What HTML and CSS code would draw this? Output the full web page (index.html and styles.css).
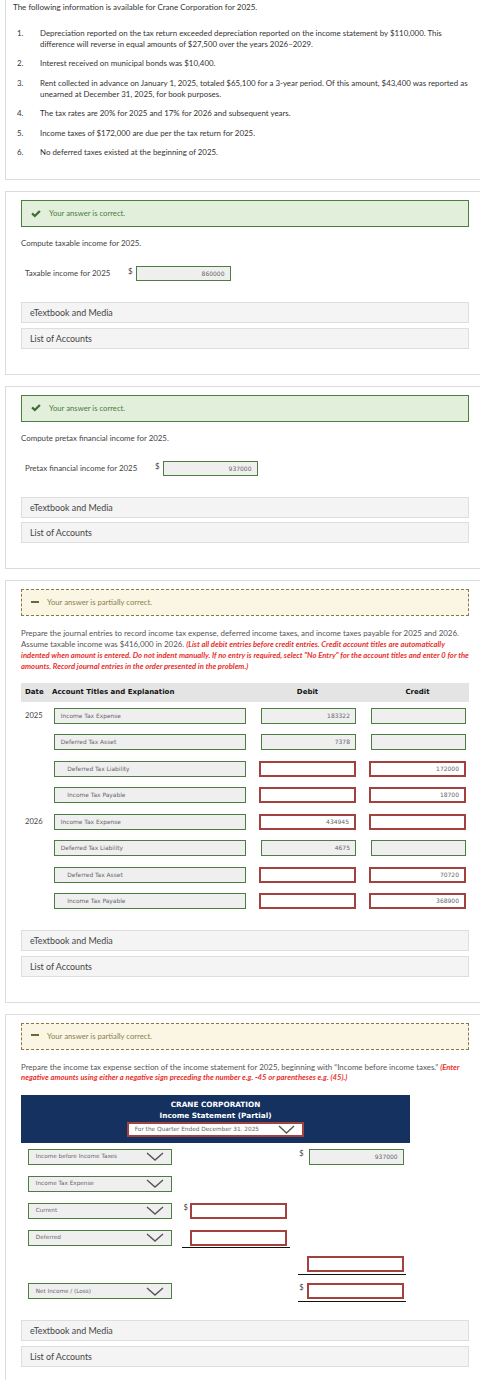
FILE: index.html
```html
<!DOCTYPE html>
<html lang="en">
<head>
<meta charset="utf-8">
<title>Crane Corporation</title>
<link rel="stylesheet" href="styles.css">
</head>
<body>
<div class="page">

  <div class="card card-first">
    <p class="intro">The following information is available for Crane Corporation for 2025.</p>
    <ol class="facts">
      <li><span class="num">1.</span><span class="txt">Depreciation reported on the tax return exceeded depreciation reported on the income statement by $110,000. This difference will reverse in equal amounts of $27,500 over the years 2026–2029.</span></li>
      <li><span class="num">2.</span><span class="txt">Interest received on municipal bonds was $10,400.</span></li>
      <li><span class="num">3.</span><span class="txt">Rent collected in advance on January 1, 2025, totaled $65,100 for a 3-year period. Of this amount, $43,400 was reported as unearned at December 31, 2025, for book purposes.</span></li>
      <li><span class="num">4.</span><span class="txt">The tax rates are 20% for 2025 and 17% for 2026 and subsequent years.</span></li>
      <li><span class="num">5.</span><span class="txt">Income taxes of $172,000 are due per the tax return for 2025.</span></li>
      <li><span class="num">6.</span><span class="txt">No deferred taxes existed at the beginning of 2025.</span></li>
    </ol>
  </div>

  <div class="card">
    <div class="inner">
      <div class="status correct">
        <svg class="check" width="10" height="8" viewBox="0 0 10 8"><path d="M0.3 4.2 L1.9 2.6 L3.8 4.4 L8.1 0.2 L9.7 1.8 L3.8 7.6 Z" fill="#3f6b36"/></svg>
        <span>Your answer is correct.</span>
      </div>
      <p class="prompt">Compute taxable income for 2025.</p>
      <div class="answer-row">
        <span class="alabel lbl-tax">Taxable income for 2025</span>
        <span class="dollar">$</span>
        <span class="box ok w95">860000</span>
      </div>
      <div class="bar first-bar">eTextbook and Media</div>
      <div class="bar">List of Accounts</div>
    </div>
  </div>

  <div class="card">
    <div class="inner">
      <div class="status correct">
        <svg class="check" width="10" height="8" viewBox="0 0 10 8"><path d="M0.3 4.2 L1.9 2.6 L3.8 4.4 L8.1 0.2 L9.7 1.8 L3.8 7.6 Z" fill="#3f6b36"/></svg>
        <span>Your answer is correct.</span>
      </div>
      <p class="prompt">Compute pretax financial income for 2025.</p>
      <div class="answer-row">
        <span class="alabel lbl-pretax">Pretax financial income for 2025</span>
        <span class="dollar">$</span>
        <span class="box ok w95">937000</span>
      </div>
      <div class="bar first-bar">eTextbook and Media</div>
      <div class="bar">List of Accounts</div>
    </div>
  </div>

  <div class="card">
    <div class="inner">
      <div class="status partial">
        <span class="minus"></span>
        <span>Your answer is partially correct.</span>
      </div>
      <p class="instr">Prepare the journal entries to record income tax expense, deferred income taxes, and income taxes payable for 2025 and 2026. Assume taxable income was $416,000 in 2026. <em class="warn">(List all debit entries before credit entries. Credit account titles are automatically indented when amount is entered. Do not indent manually. If no entry is required, select "No Entry" for the account titles and enter 0 for the amounts. Record journal entries in the order presented in the problem.)</em></p>

      <div class="jhead">
        <span class="h-date">Date</span>
        <span class="h-acct">Account Titles and Explanation</span>
        <span class="h-amt">Debit</span>
        <span class="h-amt h-credit">Credit</span>
      </div>

      <div class="jrow">
        <span class="jdate">2025</span>
        <span class="acct">Income Tax Expense</span>
        <span class="amt"><span class="box ok">183322</span></span>
        <span class="amt credit"><span class="box ok"></span></span>
      </div>
      <div class="jrow">
        <span class="jdate"></span>
        <span class="acct">Deferred Tax Asset</span>
        <span class="amt"><span class="box ok">7378</span></span>
        <span class="amt credit"><span class="box ok"></span></span>
      </div>
      <div class="jrow">
        <span class="jdate"></span>
        <span class="acct indent">Deferred Tax Liability</span>
        <span class="amt"><span class="box bad"></span></span>
        <span class="amt credit"><span class="box bad">172000</span></span>
      </div>
      <div class="jrow">
        <span class="jdate"></span>
        <span class="acct indent">Income Tax Payable</span>
        <span class="amt"><span class="box bad"></span></span>
        <span class="amt credit"><span class="box bad">18700</span></span>
      </div>
      <div class="jrow">
        <span class="jdate">2026</span>
        <span class="acct">Income Tax Expense</span>
        <span class="amt"><span class="box bad">434945</span></span>
        <span class="amt credit"><span class="box bad"></span></span>
      </div>
      <div class="jrow">
        <span class="jdate"></span>
        <span class="acct">Deferred Tax Liability</span>
        <span class="amt"><span class="box ok">4675</span></span>
        <span class="amt credit"><span class="box ok"></span></span>
      </div>
      <div class="jrow">
        <span class="jdate"></span>
        <span class="acct indent">Deferred Tax Asset</span>
        <span class="amt"><span class="box bad"></span></span>
        <span class="amt credit"><span class="box bad">70720</span></span>
      </div>
      <div class="jrow">
        <span class="jdate"></span>
        <span class="acct indent">Income Tax Payable</span>
        <span class="amt"><span class="box bad"></span></span>
        <span class="amt credit"><span class="box bad">368900</span></span>
      </div>

      <div class="bar first-bar">eTextbook and Media</div>
      <div class="bar">List of Accounts</div>
    </div>
  </div>

  <div class="card card-last">
    <div class="inner">
      <div class="status partial">
        <span class="minus"></span>
        <span>Your answer is partially correct.</span>
      </div>
      <p class="instr instr-short">Prepare the income tax expense section of the income statement for 2025, beginning with “Income before income taxes.” <em class="warn">(Enter negative amounts using either a negative sign preceding the number e.g. -45 or parentheses e.g. (45).)</em></p>

      <div class="is-head">
        <div class="is-title">CRANE CORPORATION</div>
        <div class="is-title">Income Statement (Partial)</div>
        <div class="period">
          <span>For the Quarter Ended December 31. 2025</span>
          <svg width="17" height="9" viewBox="0 0 17 9"><polyline points="1,1 8.5,8 16,1" fill="none" stroke="#555" stroke-width="1.4"/></svg>
        </div>
      </div>

      <div class="is-rows">
        <div class="is-row">
          <span class="sel"><span>Income before Income Taxes</span><svg width="18" height="9" viewBox="0 0 18 9"><polyline points="1,1 9,8 17,1" fill="none" stroke="#555" stroke-width="1.4"/></svg></span>
          <span class="col2"></span>
          <span class="col3"><span class="dollar-s">$</span><span class="box ok">937000</span></span>
        </div>
        <div class="is-row">
          <span class="sel"><span>Income Tax Expense</span><svg width="18" height="9" viewBox="0 0 18 9"><polyline points="1,1 9,8 17,1" fill="none" stroke="#555" stroke-width="1.4"/></svg></span>
        </div>
        <div class="is-row">
          <span class="sel"><span>Current</span><svg width="18" height="9" viewBox="0 0 18 9"><polyline points="1,1 9,8 17,1" fill="none" stroke="#555" stroke-width="1.4"/></svg></span>
          <span class="col2"><span class="dollar-s">$</span><span class="box bad"></span></span>
        </div>
        <div class="is-row">
          <span class="sel"><span>Deferred</span><svg width="18" height="9" viewBox="0 0 18 9"><polyline points="1,1 9,8 17,1" fill="none" stroke="#555" stroke-width="1.4"/></svg></span>
          <span class="col2 under"><span class="box bad"></span></span>
        </div>
        <div class="is-row">
          <span class="sel-empty"></span>
          <span class="col2"></span>
          <span class="col3 under"><span class="box bad"></span></span>
        </div>
        <div class="is-row">
          <span class="sel"><span>Net Income / (Loss)</span><svg width="18" height="9" viewBox="0 0 18 9"><polyline points="1,1 9,8 17,1" fill="none" stroke="#555" stroke-width="1.4"/></svg></span>
          <span class="col2"></span>
          <span class="col3 under"><span class="dollar-s">$</span><span class="box bad"></span></span>
        </div>
      </div>

      <div class="bar first-bar">eTextbook and Media</div>
      <div class="bar">List of Accounts</div>
    </div>
  </div>

</div>
</body>
</html>
```

FILE: styles.css
```css
html, body {
  margin: 0;
  padding: 0;
  background: #ffffff;
  overflow: hidden;
}

body {
  width: 480px;
  font-family: Lato, "Liberation Sans", sans-serif;
  color: #333333;
  font-size: 8px;
  line-height: 11px;
}

p { margin: 0; }

.page {
  padding-left: 5px;
}

.card {
  width: 500px;
  border: 1px solid #dcdcdc;
  border-right: none;
  background: #ffffff;
  margin-top: 11px;
}

.card-first {
  margin-top: 0;
  border-top: none;
  padding: 2px 0 21px 7px;
}

.card-last {
  border-bottom: none;
  padding-bottom: 30px;
}

.intro {
  font-size: 8px;
  color: #333;
}

.facts {
  list-style: none;
  margin: 14.5px 0 0 4px;
  padding: 0;
  width: 452px;
}

.facts li {
  display: flex;
  margin-bottom: 8.5px;
  font-size: 7.9px;
}

.facts li:last-child { margin-bottom: 0; }

.facts .num {
  flex: 0 0 23px;
}

.facts .txt {
  flex: 1;
}

.inner {
  width: 448px;
  padding: 8px 0 25px 15px;
}

/* status banners */
.status {
  box-sizing: border-box;
  height: 27px;
  display: flex;
  align-items: center;
  padding-left: 9px;
  font-size: 7.7px;
}

.status.correct {
  background: #e2efda;
  border: 1px solid #4e7d43;
  color: #4d7a43;
}

.status.partial {
  background: #faf6e3;
  border: 1px dashed #8b7645;
  color: #8b7d52;
}

.check {
  margin-right: 8px;
  flex: 0 0 10px;
}

.minus {
  width: 8px;
  height: 2px;
  background: #74643a;
  margin-right: 8px;
  margin-top: -2px;
}

.prompt {
  margin-top: 11px;
  font-size: 7.9px;
  color: #444;
}

.answer-row {
  display: flex;
  align-items: center;
  margin-top: 17px;
  margin-left: 4px;
  height: 15px;
  font-size: 7.9px;
  color: #444;
}

.alabel.lbl-tax { width: 103px; }
.alabel.lbl-pretax { width: 130px; }

.dollar {
  width: 8px;
  align-self: flex-start;
  line-height: 10px;
}

/* boxes */
.box {
  box-sizing: border-box;
  display: block;
  height: 16px;
  line-height: 14px;
  font-family: "DejaVu Sans", Verdana, sans-serif;
  font-size: 6px;
  color: #666;
  text-align: right;
}

.box.ok {
  width: 94.5px;
  border: 1px solid #4e7d43;
  background: #efefef;
  padding-right: 5px;
  margin-left: auto;
}

.box.bad {
  width: 97px;
  border: 2px solid #a3413e;
  background: #ffffff;
  padding-right: 5px;
  line-height: 12px;
}

.answer-row .box.ok {
  height: 15px;
  line-height: 13px;
  margin-left: 0;
}

/* bars */
.bar {
  box-sizing: border-box;
  height: 21px;
  line-height: 19px;
  margin-top: 4.5px;
  background: #f4f4f4;
  border: 1px solid #dedede;
  padding-left: 8px;
  font-size: 8.9px;
  color: #444;
}

.bar.first-bar { margin-top: 21px; }

/* instructions */
.instr {
  margin-top: 12px;
  font-size: 7.9px;
  line-height: 10.9px;
  color: #555;
}

.instr-short {
  line-height: 10.5px;
}

.warn {
  color: #e8302d;
  font-weight: bold;
  font-style: italic;
  font-size: 7.7px;
}

/* journal table */
.jhead {
  display: flex;
  align-items: center;
  height: 19.5px;
  margin-top: 11px;
  background: #e4e4e4;
  font-family: "DejaVu Sans", Verdana, sans-serif;
  font-weight: bold;
  font-size: 7px;
  color: #111;
}

.h-date {
  box-sizing: border-box;
  width: 31px;
  padding-left: 4px;
}

.h-acct {
  width: 207px;
}

.h-amt {
  width: 97px;
  text-align: center;
}

.h-credit {
  margin-left: 13px;
}

.jrow {
  display: flex;
  align-items: center;
  height: 16px;
  margin-top: 10.5px;
}

.jhead + .jrow { margin-top: 5.5px; }

.jdate {
  box-sizing: border-box;
  width: 33.3px;
  padding-left: 4px;
  font-size: 7.6px;
  color: #444;
  align-self: flex-start;
  line-height: 14px;
}

.acct {
  box-sizing: border-box;
  width: 191.4px;
  height: 16px;
  line-height: 14px;
  border: 1px solid #4e7d43;
  background: #efefef;
  padding-left: 5.5px;
  font-family: "DejaVu Sans", Verdana, sans-serif;
  font-size: 5.9px;
  color: #666;
}

.acct.indent { padding-left: 12px; }

.amt {
  display: flex;
  width: 97px;
  margin-left: 13.3px;
}

.amt.credit { margin-left: 13px; }

/* income statement */
.is-head {
  box-sizing: border-box;
  width: 389px;
  height: 48.7px;
  margin-top: 12px;
  background: #14315f;
  padding-top: 4px;
  display: flex;
  flex-direction: column;
  align-items: center;
}

.is-title {
  font-family: "DejaVu Sans", Verdana, sans-serif;
  font-weight: bold;
  font-size: 7.3px;
  line-height: 11px;
  color: #ffffff;
}

.period {
  box-sizing: border-box;
  width: 177.6px;
  height: 15.6px;
  margin-top: 1px;
  background: #ffffff;
  border: 2px solid #a3413e;
  display: flex;
  align-items: center;
  justify-content: space-between;
  padding: 0 7px 0 6px;
  font-family: "DejaVu Sans", Verdana, sans-serif;
  font-size: 5.8px;
  color: #666;
}

.is-rows {
  margin-top: 5.6px;
  margin-left: 7.3px;
}

.is-row {
  display: flex;
  align-items: flex-start;
  height: 16px;
  margin-bottom: 10.9px;
}

.sel, .sel-empty {
  box-sizing: border-box;
  flex: 0 0 143.4px;
  height: 16px;
}

.sel {
  display: flex;
  align-items: center;
  justify-content: space-between;
  border: 1px solid #4e7d43;
  background: #efefef;
  padding: 0 7px 0 6.5px;
  font-family: "DejaVu Sans", Verdana, sans-serif;
  font-size: 5.7px;
  color: #666;
}

.col2, .col3 {
  box-sizing: border-box;
  display: flex;
  align-items: flex-start;
  width: 108px;
}

.col2 {
  margin-left: 10.3px;
  padding-right: 3.3px;
}

.col3 {
  margin-left: 7.7px;
  padding-right: 2px;
}

.under {
  border-bottom: 1px solid #111;
  padding-bottom: 1.5px;
}

.dollar-s {
  font-size: 7.5px;
  line-height: 9px;
  color: #444;
  padding-left: 1.5px;
}

.is-row .box.bad,
.is-row .box.ok {
  margin-left: auto;
}
```
